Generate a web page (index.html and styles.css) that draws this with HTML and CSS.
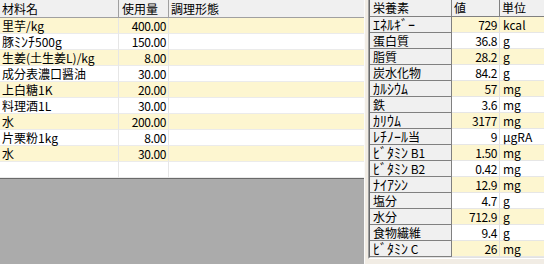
FILE: index.html
```html
<!DOCTYPE html>
<html lang="ja">
<head>
<meta charset="utf-8">
<link rel="stylesheet" href="styles.css">
</head>
<body>
<div class="app">
  <div class="materials">
    <div class="mgrid">
      <div class="h c1">材料名</div><div class="h c2">使用量</div><div class="h c3">調理形態</div>
      <div class="d y">里芋/kg</div><div class="d y n">400.00</div><div class="d y e"></div>
      <div class="d">豚<span class="hk">ﾐﾝﾁ</span>500g</div><div class="d n">150.00</div><div class="d e"></div>
      <div class="d y">生姜(土生姜L)/kg</div><div class="d y n">8.00</div><div class="d y e"></div>
      <div class="d">成分表濃口醤油</div><div class="d n">30.00</div><div class="d e"></div>
      <div class="d y">上白糖1K</div><div class="d y n">20.00</div><div class="d y e"></div>
      <div class="d">料理酒1L</div><div class="d n">30.00</div><div class="d e"></div>
      <div class="d y">水</div><div class="d y n">200.00</div><div class="d y e"></div>
      <div class="d">片栗粉1kg</div><div class="d n">8.00</div><div class="d e"></div>
      <div class="d y">水</div><div class="d y n">30.00</div><div class="d y e"></div>
      <div class="d"></div><div class="d n"></div><div class="d e"></div>
    </div>
  </div>
  <div class="nutrition">
    <div class="ngrid">
      <div class="nh">栄養素</div><div class="nh">値</div><div class="nh last">単位</div>
      <div class="f"><span class="hk">ｴﾈﾙｷﾞｰ</span></div><div class="v y">729</div><div class="u y">kcal</div>
      <div class="f">蛋白質</div><div class="v">36.8</div><div class="u">g</div>
      <div class="f">脂質</div><div class="v y">28.2</div><div class="u y">g</div>
      <div class="f">炭水化物</div><div class="v">84.2</div><div class="u">g</div>
      <div class="f"><span class="hk">ｶﾙｼｳﾑ</span></div><div class="v y">57</div><div class="u y">mg</div>
      <div class="f">鉄</div><div class="v">3.6</div><div class="u">mg</div>
      <div class="f"><span class="hk">ｶﾘｳﾑ</span></div><div class="v y">3177</div><div class="u y">mg</div>
      <div class="f"><span class="hk">ﾚﾁﾉｰﾙ</span>当</div><div class="v">9</div><div class="u">μgRA</div>
      <div class="f"><span class="hk">ﾋﾞﾀﾐﾝ</span> B1</div><div class="v y">1.50</div><div class="u y">mg</div>
      <div class="f"><span class="hk">ﾋﾞﾀﾐﾝ</span> B2</div><div class="v">0.42</div><div class="u">mg</div>
      <div class="f"><span class="hk">ﾅｲｱｼﾝ</span></div><div class="v y">12.9</div><div class="u y">mg</div>
      <div class="f">塩分</div><div class="v">4.7</div><div class="u">g</div>
      <div class="f">水分</div><div class="v y">712.9</div><div class="u y">g</div>
      <div class="f">食物繊維</div><div class="v">9.4</div><div class="u">g</div>
      <div class="f"><span class="hk">ﾋﾞﾀﾐﾝ</span> C</div><div class="v y">26</div><div class="u y">mg</div>
    </div>
  </div>
</div>
</body>
</html>
```
FILE: styles.css
```css
* { box-sizing: border-box; }
html, body { margin: 0; padding: 0; }
body {
  width: 544px;
  height: 264px;
  overflow: hidden;
  background: #f1ece4;
  font-family: "Noto Sans CJK JP", sans-serif;
  font-size: 12px;
  color: #000;
}
.app {
  display: flex;
  height: 264px;
}
.materials {
  flex: none;
  width: 365px;
  height: 264px;
  background: #ababab;
  border-right: 1px solid #fbfbfb;
}
.mgrid {
  display: grid;
  grid-template-columns: 119px 50px 195px;
  border-bottom: 1px solid #6a6a6a;
}
.mgrid > div {
  white-space: nowrap;
}
.hk {
  font-size: 14px;
  line-height: 15px;
}
.h {
  height: 18px;
  line-height: 17px;
  background: #f0f0f0;
  border-bottom: 1px solid #a0a0a0;
  padding-left: 2px;
}
.h.c1, .h.c2 { border-right: 1px solid #a0a0a0; }
.h.c2 { padding-left: 3px; }
.d {
  height: 16px;
  line-height: 15px;
  background: #fff;
  border-bottom: 1px solid #ebebeb;
  border-right: 1px solid #e6e6e6;
  padding-left: 2px;
}
.d.e { border-right: none; }
.y { background: #fdf6d0; }
.n {
  text-align: right;
  padding-left: 0;
  padding-right: 2px;
  letter-spacing: -0.4px;
}
.nutrition {
  flex: 1;
  margin-left: 3px;
  align-self: flex-start;
  border-left: 1px solid #a0a0a0;
  border-bottom: 1px solid #ffffff;
}
.ngrid {
  display: grid;
  grid-template-columns: 82px 48px 1fr;
  border-left: 1px solid #6a6a6a;
  border-bottom: 1px solid #e2e2e2;
}
.ngrid > div {
  white-space: nowrap;
}
.nh {
  height: 17px;
  line-height: 16px;
  background: #f0f0f0;
  border-bottom: 1px solid #808080;
  border-right: 1px solid #808080;
  padding-left: 2px;
}
.nh:first-child { padding-left: 3px; }
.nh.last { border-right: none; }
.f {
  height: 16px;
  line-height: 15px;
  background: #f0f0f0;
  border-bottom: 1px solid #808080;
  border-right: 1px solid #808080;
  padding-left: 3px;
}
.v {
  height: 16px;
  line-height: 15px;
  background: #fff;
  border-bottom: 1px solid #e6e6e6;
  border-right: 1px solid #e0e0e0;
  text-align: right;
  padding-right: 2px;
  letter-spacing: -0.4px;
}
.u {
  height: 16px;
  line-height: 15px;
  background: #fff;
  border-bottom: 1px solid #e6e6e6;
  padding-left: 3px;
}
.v.y, .u.y { background: #fdf6d0; }
```
